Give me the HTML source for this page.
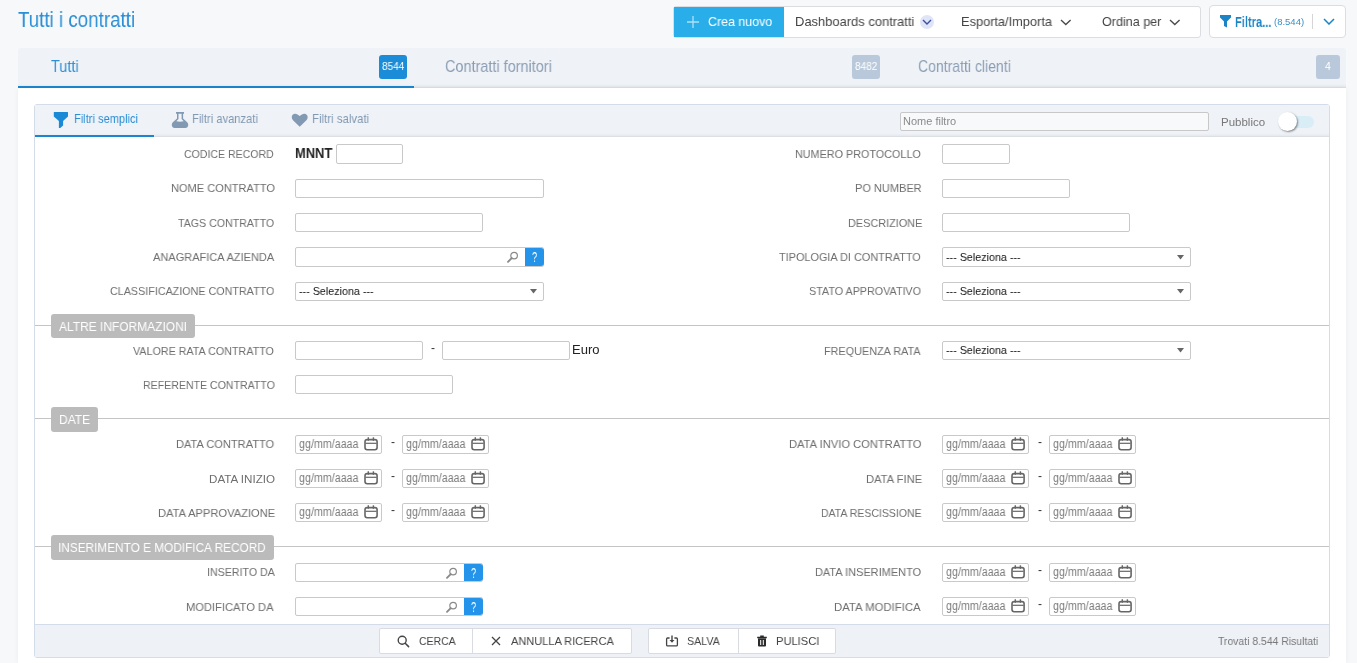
<!DOCTYPE html>
<html><head><meta charset="utf-8"><title>Tutti i contratti</title>
<style>
html,body{margin:0;padding:0}
body{width:1357px;height:663px;overflow:hidden;position:relative;background:#f7f8fa;font-family:"Liberation Sans",sans-serif}
.t{position:absolute;white-space:nowrap;transform-origin:0 0;will-change:transform}
</style></head><body>
<div style="position:absolute;left:673px;top:6px;width:528px;height:32px;box-sizing:border-box;border:1px solid #dcdde0;border-radius:3px;background:#fff"></div>
<div style="position:absolute;left:674px;top:7px;width:110px;height:30px;box-sizing:border-box;background:#2aaee9"></div>
<div style="position:absolute;left:1209px;top:5px;width:137px;height:33px;box-sizing:border-box;border:1px solid #dcdde0;border-radius:4px;background:#fff"></div>
<div style="position:absolute;left:1312px;top:14px;width:1px;height:15px;box-sizing:border-box;background:#d5d5d5"></div>
<div style="position:absolute;left:18px;top:48px;width:1328px;height:40px;box-sizing:border-box;background:#eff2f7;border-bottom:1px solid #dcdfe4;border-radius:3px 3px 0 0;box-shadow:inset 0 -3px 3px -2px rgba(0,0,0,0.05)"></div>
<div style="position:absolute;left:18px;top:86px;width:396px;height:2px;box-sizing:border-box;background:#1a86d0"></div>
<div style="position:absolute;left:379px;top:55px;width:28px;height:24px;box-sizing:border-box;background:#1b8cd8;border-radius:3px"></div>
<div style="position:absolute;left:852px;top:55px;width:28px;height:24px;box-sizing:border-box;background:#b9c9db;border-radius:3px"></div>
<div style="position:absolute;left:1316px;top:55px;width:24px;height:24px;box-sizing:border-box;background:#b9c9db;border-radius:3px"></div>
<div style="position:absolute;left:18px;top:88px;width:1328px;height:575px;box-sizing:border-box;background:#fff;box-shadow:0 0 6px rgba(0,0,0,0.05)"></div>
<div style="position:absolute;left:34px;top:104px;width:1296px;height:554px;box-sizing:border-box;border:1px solid #d3dce8;border-radius:3px;background:#fff"></div>
<div style="position:absolute;left:35px;top:105px;width:1294px;height:32px;box-sizing:border-box;background:#eff2f7;border-bottom:1px solid #dcdfe3;box-shadow:inset 0 -3px 3px -2px rgba(0,0,0,0.05)"></div>
<div style="position:absolute;left:35px;top:135px;width:119px;height:2px;box-sizing:border-box;background:#1a86d0"></div>
<div style="position:absolute;left:900px;top:112px;width:309px;height:19px;box-sizing:border-box;border:1px solid #c8c8c8;border-radius:2px;background:#f8f9fb"></div>
<div style="position:absolute;left:1286px;top:116px;width:28px;height:12px;box-sizing:border-box;background:#d9edf7;border-radius:6px"></div>
<div style="position:absolute;left:1278px;top:112px;width:19px;height:19px;box-sizing:border-box;background:#fff;border-radius:50%;box-shadow:1px 1px 2px rgba(0,0,0,0.45)"></div>
<div style="position:absolute;left:35px;top:624px;width:1294px;height:33px;box-sizing:border-box;background:#eef2f7;border-top:1px solid #d3dce8"></div>
<div style="position:absolute;left:35px;top:325px;width:1294px;height:1px;box-sizing:border-box;background:#c4c4c4"></div>
<div style="position:absolute;left:51px;top:314px;width:144px;height:24px;box-sizing:border-box;background:#bbbbbb;border-radius:3px"></div>
<div style="position:absolute;left:35px;top:418px;width:1294px;height:1px;box-sizing:border-box;background:#c4c4c4"></div>
<div style="position:absolute;left:51px;top:407px;width:47px;height:25px;box-sizing:border-box;background:#bbbbbb;border-radius:3px"></div>
<div style="position:absolute;left:35px;top:546px;width:1294px;height:1px;box-sizing:border-box;background:#c4c4c4"></div>
<div style="position:absolute;left:51px;top:535px;width:223px;height:25px;box-sizing:border-box;background:#bbbbbb;border-radius:3px"></div>
<div style="position:absolute;left:336px;top:144px;width:67px;height:20px;box-sizing:border-box;border:1px solid #c9c9c9;border-radius:2px;background:#fff"></div>
<div style="position:absolute;left:295px;top:179px;width:249px;height:19px;box-sizing:border-box;border:1px solid #c9c9c9;border-radius:2px;background:#fff"></div>
<div style="position:absolute;left:295px;top:213px;width:188px;height:19px;box-sizing:border-box;border:1px solid #c9c9c9;border-radius:2px;background:#fff"></div>
<div style="position:absolute;left:295px;top:247px;width:249px;height:20px;box-sizing:border-box;border:1px solid #c9c9c9;border-radius:2px;background:#fff"></div>
<div style="position:absolute;left:524.5px;top:248px;width:19.5px;height:18px;box-sizing:border-box;background:#2394ea;border-radius:0 3px 3px 0"></div>
<svg style="position:absolute;left:506px;top:250px" width="14" height="14" viewBox="0 0 14 14"><circle cx="8.1" cy="5.6" r="3.3" fill="none" stroke="#8a8a8a" stroke-width="1.2"/><line x1="5.7" y1="8.1" x2="2" y2="11.8" stroke="#8a8a8a" stroke-width="1.9" stroke-linecap="round"/></svg>
<div style="position:absolute;left:295px;top:282px;width:249px;height:19px;box-sizing:border-box;border:1px solid #c9c9c9;border-radius:2px;background:#fff"></div>
<svg style="position:absolute;left:530px;top:289px" width="7" height="5" viewBox="0 0 7 5"><path d="M0 0H7L3.5 4.4Z" fill="#666"/></svg>
<div style="position:absolute;left:942px;top:144px;width:68px;height:20px;box-sizing:border-box;border:1px solid #c9c9c9;border-radius:2px;background:#fff"></div>
<div style="position:absolute;left:942px;top:179px;width:128px;height:19px;box-sizing:border-box;border:1px solid #c9c9c9;border-radius:2px;background:#fff"></div>
<div style="position:absolute;left:942px;top:213px;width:188px;height:19px;box-sizing:border-box;border:1px solid #c9c9c9;border-radius:2px;background:#fff"></div>
<div style="position:absolute;left:942px;top:247px;width:249px;height:20px;box-sizing:border-box;border:1px solid #c9c9c9;border-radius:2px;background:#fff"></div>
<svg style="position:absolute;left:1177px;top:255px" width="7" height="5" viewBox="0 0 7 5"><path d="M0 0H7L3.5 4.4Z" fill="#666"/></svg>
<div style="position:absolute;left:942px;top:282px;width:249px;height:19px;box-sizing:border-box;border:1px solid #c9c9c9;border-radius:2px;background:#fff"></div>
<svg style="position:absolute;left:1177px;top:289px" width="7" height="5" viewBox="0 0 7 5"><path d="M0 0H7L3.5 4.4Z" fill="#666"/></svg>
<div style="position:absolute;left:295px;top:341px;width:128px;height:19px;box-sizing:border-box;border:1px solid #c9c9c9;border-radius:2px;background:#fff"></div>
<div style="position:absolute;left:442px;top:341px;width:128px;height:19px;box-sizing:border-box;border:1px solid #c9c9c9;border-radius:2px;background:#fff"></div>
<div style="position:absolute;left:295px;top:375px;width:158px;height:19px;box-sizing:border-box;border:1px solid #c9c9c9;border-radius:2px;background:#fff"></div>
<div style="position:absolute;left:942px;top:341px;width:249px;height:19px;box-sizing:border-box;border:1px solid #c9c9c9;border-radius:2px;background:#fff"></div>
<svg style="position:absolute;left:1177px;top:348px" width="7" height="5" viewBox="0 0 7 5"><path d="M0 0H7L3.5 4.4Z" fill="#666"/></svg>
<div style="position:absolute;left:295px;top:435px;width:87px;height:19px;box-sizing:border-box;border:1px solid #c9c9c9;border-radius:2px;background:#fff"></div>
<svg style="position:absolute;left:364px;top:437px" width="15" height="15" viewBox="0 0 15 15"><rect x="1" y="2.6" width="12.1" height="10.2" rx="2.2" fill="none" stroke="#666" stroke-width="1.6"/><line x1="1.5" y1="6.3" x2="12.6" y2="6.3" stroke="#666" stroke-width="1.2"/><line x1="4.3" y1="0.3" x2="4.3" y2="3.8" stroke="#666" stroke-width="1.4"/><line x1="9.4" y1="0.3" x2="9.4" y2="3.8" stroke="#666" stroke-width="1.4"/></svg>
<div style="position:absolute;left:402px;top:435px;width:87px;height:19px;box-sizing:border-box;border:1px solid #c9c9c9;border-radius:2px;background:#fff"></div>
<svg style="position:absolute;left:471px;top:437px" width="15" height="15" viewBox="0 0 15 15"><rect x="1" y="2.6" width="12.1" height="10.2" rx="2.2" fill="none" stroke="#666" stroke-width="1.6"/><line x1="1.5" y1="6.3" x2="12.6" y2="6.3" stroke="#666" stroke-width="1.2"/><line x1="4.3" y1="0.3" x2="4.3" y2="3.8" stroke="#666" stroke-width="1.4"/><line x1="9.4" y1="0.3" x2="9.4" y2="3.8" stroke="#666" stroke-width="1.4"/></svg>
<div style="position:absolute;left:942px;top:435px;width:87px;height:19px;box-sizing:border-box;border:1px solid #c9c9c9;border-radius:2px;background:#fff"></div>
<svg style="position:absolute;left:1011px;top:437px" width="15" height="15" viewBox="0 0 15 15"><rect x="1" y="2.6" width="12.1" height="10.2" rx="2.2" fill="none" stroke="#666" stroke-width="1.6"/><line x1="1.5" y1="6.3" x2="12.6" y2="6.3" stroke="#666" stroke-width="1.2"/><line x1="4.3" y1="0.3" x2="4.3" y2="3.8" stroke="#666" stroke-width="1.4"/><line x1="9.4" y1="0.3" x2="9.4" y2="3.8" stroke="#666" stroke-width="1.4"/></svg>
<div style="position:absolute;left:1049px;top:435px;width:87px;height:19px;box-sizing:border-box;border:1px solid #c9c9c9;border-radius:2px;background:#fff"></div>
<svg style="position:absolute;left:1118px;top:437px" width="15" height="15" viewBox="0 0 15 15"><rect x="1" y="2.6" width="12.1" height="10.2" rx="2.2" fill="none" stroke="#666" stroke-width="1.6"/><line x1="1.5" y1="6.3" x2="12.6" y2="6.3" stroke="#666" stroke-width="1.2"/><line x1="4.3" y1="0.3" x2="4.3" y2="3.8" stroke="#666" stroke-width="1.4"/><line x1="9.4" y1="0.3" x2="9.4" y2="3.8" stroke="#666" stroke-width="1.4"/></svg>
<div style="position:absolute;left:295px;top:469px;width:87px;height:19px;box-sizing:border-box;border:1px solid #c9c9c9;border-radius:2px;background:#fff"></div>
<svg style="position:absolute;left:364px;top:471px" width="15" height="15" viewBox="0 0 15 15"><rect x="1" y="2.6" width="12.1" height="10.2" rx="2.2" fill="none" stroke="#666" stroke-width="1.6"/><line x1="1.5" y1="6.3" x2="12.6" y2="6.3" stroke="#666" stroke-width="1.2"/><line x1="4.3" y1="0.3" x2="4.3" y2="3.8" stroke="#666" stroke-width="1.4"/><line x1="9.4" y1="0.3" x2="9.4" y2="3.8" stroke="#666" stroke-width="1.4"/></svg>
<div style="position:absolute;left:402px;top:469px;width:87px;height:19px;box-sizing:border-box;border:1px solid #c9c9c9;border-radius:2px;background:#fff"></div>
<svg style="position:absolute;left:471px;top:471px" width="15" height="15" viewBox="0 0 15 15"><rect x="1" y="2.6" width="12.1" height="10.2" rx="2.2" fill="none" stroke="#666" stroke-width="1.6"/><line x1="1.5" y1="6.3" x2="12.6" y2="6.3" stroke="#666" stroke-width="1.2"/><line x1="4.3" y1="0.3" x2="4.3" y2="3.8" stroke="#666" stroke-width="1.4"/><line x1="9.4" y1="0.3" x2="9.4" y2="3.8" stroke="#666" stroke-width="1.4"/></svg>
<div style="position:absolute;left:942px;top:469px;width:87px;height:19px;box-sizing:border-box;border:1px solid #c9c9c9;border-radius:2px;background:#fff"></div>
<svg style="position:absolute;left:1011px;top:471px" width="15" height="15" viewBox="0 0 15 15"><rect x="1" y="2.6" width="12.1" height="10.2" rx="2.2" fill="none" stroke="#666" stroke-width="1.6"/><line x1="1.5" y1="6.3" x2="12.6" y2="6.3" stroke="#666" stroke-width="1.2"/><line x1="4.3" y1="0.3" x2="4.3" y2="3.8" stroke="#666" stroke-width="1.4"/><line x1="9.4" y1="0.3" x2="9.4" y2="3.8" stroke="#666" stroke-width="1.4"/></svg>
<div style="position:absolute;left:1049px;top:469px;width:87px;height:19px;box-sizing:border-box;border:1px solid #c9c9c9;border-radius:2px;background:#fff"></div>
<svg style="position:absolute;left:1118px;top:471px" width="15" height="15" viewBox="0 0 15 15"><rect x="1" y="2.6" width="12.1" height="10.2" rx="2.2" fill="none" stroke="#666" stroke-width="1.6"/><line x1="1.5" y1="6.3" x2="12.6" y2="6.3" stroke="#666" stroke-width="1.2"/><line x1="4.3" y1="0.3" x2="4.3" y2="3.8" stroke="#666" stroke-width="1.4"/><line x1="9.4" y1="0.3" x2="9.4" y2="3.8" stroke="#666" stroke-width="1.4"/></svg>
<div style="position:absolute;left:295px;top:503px;width:87px;height:19px;box-sizing:border-box;border:1px solid #c9c9c9;border-radius:2px;background:#fff"></div>
<svg style="position:absolute;left:364px;top:505px" width="15" height="15" viewBox="0 0 15 15"><rect x="1" y="2.6" width="12.1" height="10.2" rx="2.2" fill="none" stroke="#666" stroke-width="1.6"/><line x1="1.5" y1="6.3" x2="12.6" y2="6.3" stroke="#666" stroke-width="1.2"/><line x1="4.3" y1="0.3" x2="4.3" y2="3.8" stroke="#666" stroke-width="1.4"/><line x1="9.4" y1="0.3" x2="9.4" y2="3.8" stroke="#666" stroke-width="1.4"/></svg>
<div style="position:absolute;left:402px;top:503px;width:87px;height:19px;box-sizing:border-box;border:1px solid #c9c9c9;border-radius:2px;background:#fff"></div>
<svg style="position:absolute;left:471px;top:505px" width="15" height="15" viewBox="0 0 15 15"><rect x="1" y="2.6" width="12.1" height="10.2" rx="2.2" fill="none" stroke="#666" stroke-width="1.6"/><line x1="1.5" y1="6.3" x2="12.6" y2="6.3" stroke="#666" stroke-width="1.2"/><line x1="4.3" y1="0.3" x2="4.3" y2="3.8" stroke="#666" stroke-width="1.4"/><line x1="9.4" y1="0.3" x2="9.4" y2="3.8" stroke="#666" stroke-width="1.4"/></svg>
<div style="position:absolute;left:942px;top:503px;width:87px;height:19px;box-sizing:border-box;border:1px solid #c9c9c9;border-radius:2px;background:#fff"></div>
<svg style="position:absolute;left:1011px;top:505px" width="15" height="15" viewBox="0 0 15 15"><rect x="1" y="2.6" width="12.1" height="10.2" rx="2.2" fill="none" stroke="#666" stroke-width="1.6"/><line x1="1.5" y1="6.3" x2="12.6" y2="6.3" stroke="#666" stroke-width="1.2"/><line x1="4.3" y1="0.3" x2="4.3" y2="3.8" stroke="#666" stroke-width="1.4"/><line x1="9.4" y1="0.3" x2="9.4" y2="3.8" stroke="#666" stroke-width="1.4"/></svg>
<div style="position:absolute;left:1049px;top:503px;width:87px;height:19px;box-sizing:border-box;border:1px solid #c9c9c9;border-radius:2px;background:#fff"></div>
<svg style="position:absolute;left:1118px;top:505px" width="15" height="15" viewBox="0 0 15 15"><rect x="1" y="2.6" width="12.1" height="10.2" rx="2.2" fill="none" stroke="#666" stroke-width="1.6"/><line x1="1.5" y1="6.3" x2="12.6" y2="6.3" stroke="#666" stroke-width="1.2"/><line x1="4.3" y1="0.3" x2="4.3" y2="3.8" stroke="#666" stroke-width="1.4"/><line x1="9.4" y1="0.3" x2="9.4" y2="3.8" stroke="#666" stroke-width="1.4"/></svg>
<div style="position:absolute;left:295px;top:563px;width:188px;height:19px;box-sizing:border-box;border:1px solid #c9c9c9;border-radius:2px;background:#fff"></div>
<div style="position:absolute;left:463.5px;top:564px;width:19.5px;height:17px;box-sizing:border-box;background:#2394ea;border-radius:0 3px 3px 0"></div>
<svg style="position:absolute;left:445px;top:566px" width="14" height="14" viewBox="0 0 14 14"><circle cx="8.1" cy="5.6" r="3.3" fill="none" stroke="#8a8a8a" stroke-width="1.2"/><line x1="5.7" y1="8.1" x2="2" y2="11.8" stroke="#8a8a8a" stroke-width="1.9" stroke-linecap="round"/></svg>
<div style="position:absolute;left:942px;top:563px;width:87px;height:19px;box-sizing:border-box;border:1px solid #c9c9c9;border-radius:2px;background:#fff"></div>
<svg style="position:absolute;left:1011px;top:565px" width="15" height="15" viewBox="0 0 15 15"><rect x="1" y="2.6" width="12.1" height="10.2" rx="2.2" fill="none" stroke="#666" stroke-width="1.6"/><line x1="1.5" y1="6.3" x2="12.6" y2="6.3" stroke="#666" stroke-width="1.2"/><line x1="4.3" y1="0.3" x2="4.3" y2="3.8" stroke="#666" stroke-width="1.4"/><line x1="9.4" y1="0.3" x2="9.4" y2="3.8" stroke="#666" stroke-width="1.4"/></svg>
<div style="position:absolute;left:1049px;top:563px;width:87px;height:19px;box-sizing:border-box;border:1px solid #c9c9c9;border-radius:2px;background:#fff"></div>
<svg style="position:absolute;left:1118px;top:565px" width="15" height="15" viewBox="0 0 15 15"><rect x="1" y="2.6" width="12.1" height="10.2" rx="2.2" fill="none" stroke="#666" stroke-width="1.6"/><line x1="1.5" y1="6.3" x2="12.6" y2="6.3" stroke="#666" stroke-width="1.2"/><line x1="4.3" y1="0.3" x2="4.3" y2="3.8" stroke="#666" stroke-width="1.4"/><line x1="9.4" y1="0.3" x2="9.4" y2="3.8" stroke="#666" stroke-width="1.4"/></svg>
<div style="position:absolute;left:295px;top:597px;width:188px;height:19px;box-sizing:border-box;border:1px solid #c9c9c9;border-radius:2px;background:#fff"></div>
<div style="position:absolute;left:463.5px;top:598px;width:19.5px;height:17px;box-sizing:border-box;background:#2394ea;border-radius:0 3px 3px 0"></div>
<svg style="position:absolute;left:445px;top:600px" width="14" height="14" viewBox="0 0 14 14"><circle cx="8.1" cy="5.6" r="3.3" fill="none" stroke="#8a8a8a" stroke-width="1.2"/><line x1="5.7" y1="8.1" x2="2" y2="11.8" stroke="#8a8a8a" stroke-width="1.9" stroke-linecap="round"/></svg>
<div style="position:absolute;left:942px;top:597px;width:87px;height:19px;box-sizing:border-box;border:1px solid #c9c9c9;border-radius:2px;background:#fff"></div>
<svg style="position:absolute;left:1011px;top:599px" width="15" height="15" viewBox="0 0 15 15"><rect x="1" y="2.6" width="12.1" height="10.2" rx="2.2" fill="none" stroke="#666" stroke-width="1.6"/><line x1="1.5" y1="6.3" x2="12.6" y2="6.3" stroke="#666" stroke-width="1.2"/><line x1="4.3" y1="0.3" x2="4.3" y2="3.8" stroke="#666" stroke-width="1.4"/><line x1="9.4" y1="0.3" x2="9.4" y2="3.8" stroke="#666" stroke-width="1.4"/></svg>
<div style="position:absolute;left:1049px;top:597px;width:87px;height:19px;box-sizing:border-box;border:1px solid #c9c9c9;border-radius:2px;background:#fff"></div>
<svg style="position:absolute;left:1118px;top:599px" width="15" height="15" viewBox="0 0 15 15"><rect x="1" y="2.6" width="12.1" height="10.2" rx="2.2" fill="none" stroke="#666" stroke-width="1.6"/><line x1="1.5" y1="6.3" x2="12.6" y2="6.3" stroke="#666" stroke-width="1.2"/><line x1="4.3" y1="0.3" x2="4.3" y2="3.8" stroke="#666" stroke-width="1.4"/><line x1="9.4" y1="0.3" x2="9.4" y2="3.8" stroke="#666" stroke-width="1.4"/></svg>
<div style="position:absolute;left:379px;top:628px;width:253px;height:26px;box-sizing:border-box;border:1px solid #d8dce2;border-radius:2px;background:#fff"></div>
<div style="position:absolute;left:472px;top:629px;width:1px;height:24px;box-sizing:border-box;background:#d8dce2"></div>
<div style="position:absolute;left:648px;top:628px;width:188px;height:26px;box-sizing:border-box;border:1px solid #d8dce2;border-radius:2px;background:#fff"></div>
<div style="position:absolute;left:738px;top:629px;width:1px;height:24px;box-sizing:border-box;background:#d8dce2"></div>
<svg style="position:absolute;left:397px;top:635px" width="13" height="13" viewBox="0 0 13 13"><circle cx="5.2" cy="5.2" r="4" fill="none" stroke="#444" stroke-width="1.4"/><line x1="8.2" y1="8.2" x2="11.6" y2="11.6" stroke="#444" stroke-width="1.5" stroke-linecap="round"/></svg>
<svg style="position:absolute;left:491px;top:636px" width="10" height="10" viewBox="0 0 10 10"><path d="M1 1L9 9M9 1L1 9" stroke="#444" stroke-width="1.3"/></svg>
<svg style="position:absolute;left:665px;top:635px" width="14" height="12" viewBox="0 0 14 12"><path d="M4.6 3H2.6Q1.6 3 1.6 4V9.9Q1.6 10.9 2.6 10.9H11.4Q12.4 10.9 12.4 9.9V4Q12.4 3 11.4 3H9.4" fill="none" stroke="#444" stroke-width="1.3"/><path d="M7 0.6V5.6" stroke="#444" stroke-width="1.4"/><path d="M4.5 5H9.5L7 7.8Z" fill="#444"/></svg>
<svg style="position:absolute;left:757px;top:635px" width="10" height="12" viewBox="0 0 10 12"><path d="M0.2 1.7H9.8V3.2H0.2Z M3.2 0.4H6.8V1.8H3.2Z M1 3.6H9V10.6Q9 11.5 8.1 11.5H1.9Q1 11.5 1 10.6Z" fill="#2a2a2a"/><path d="M3.7 5V10M6.3 5V10" stroke="#fff" stroke-width="1"/></svg>
<svg style="position:absolute;left:687px;top:16px" width="12" height="12" viewBox="0 0 12 12"><path d="M6 0V12M0 6H12" stroke="rgba(255,255,255,0.62)" stroke-width="1.3"/></svg>
<div style="position:absolute;left:920px;top:15px;width:14px;height:14px;border-radius:50%;background:#dfe5f6"></div>
<svg style="position:absolute;left:922px;top:19px" width="10" height="6" viewBox="0 0 10 6"><path d="M1 1L5 5L9 1" fill="none" stroke="#3b4fa3" stroke-width="1.4"/></svg>
<svg style="position:absolute;left:1060px;top:19px" width="12" height="7" viewBox="0 0 12 7"><path d="M1 1L5.8 5.6L10.6 1" fill="none" stroke="#4a4a4a" stroke-width="1.35"/></svg>
<svg style="position:absolute;left:1169px;top:19px" width="12" height="7" viewBox="0 0 12 7"><path d="M1 1L5.8 5.6L10.6 1" fill="none" stroke="#4a4a4a" stroke-width="1.35"/></svg>
<svg style="position:absolute;left:1323px;top:18px" width="12" height="7" viewBox="0 0 12 7"><path d="M1 1L6 6L11 1" fill="none" stroke="#1a84c6" stroke-width="1.5"/></svg>
<svg style="position:absolute;left:1220px;top:15px" width="11" height="13" viewBox="0 0 11 13"><path d="M0 0H11V2.5L7 6.5V12.5L4 11V6.5L0 2.5Z" fill="#1a84c6"/></svg>
<svg style="position:absolute;left:53px;top:111px" width="16" height="18" viewBox="0 0 16 18"><path d="M1.3 1H14.5Q15 1 15 1.5V5.6L10.1 10.1V14.4L7.2 16.9H5.9V10.1L0.8 5.6V1.5Q0.8 1 1.3 1Z" fill="#1a8ad6"/></svg>
<svg style="position:absolute;left:171px;top:111px" width="18" height="18" viewBox="0 0 18 18"><path fill-rule="evenodd" d="M5 1H13V2.8H12.1V7.4L16.4 11.6Q17.6 13 17.1 15Q16.4 16.9 14.5 16.9H3.5Q1.6 16.9 0.9 15Q0.4 13 1.6 11.6L6 7.4V2.8H5Z M7.5 2.8V8L5.3 10.3Q9 11 12.7 10.3L10.6 8V2.8Z" fill="#8199b3"/></svg>
<svg style="position:absolute;left:291px;top:113px" width="18" height="15" viewBox="0 0 18 15"><path d="M8.7 13.8L2 7.3C-0.2 5.1 0.6 1.1 3.6 0.8C5.5 0.6 7.2 1.6 8.7 3.1C10.2 1.6 11.9 0.6 13.8 0.8C16.8 1.1 17.6 5.1 15.4 7.3Z" fill="#8199b3"/></svg>
<div class="t" style="left:18.10px;top:9.00px;font-size:22px;line-height:22px;transform:scaleX(0.8529);color:#2b8fd5;">Tutti i contratti</div>
<div class="t" style="left:708.00px;top:15.00px;font-size:13px;line-height:13px;transform:scaleX(0.9552);color:#fff;">Crea nuovo</div>
<div class="t" style="left:794.61px;top:15.00px;font-size:13px;line-height:13px;transform:scaleX(0.9949);color:#444;">Dashboards contratti</div>
<div class="t" style="left:961.02px;top:15.00px;font-size:13px;line-height:13px;transform:scaleX(0.9837);color:#444;">Esporta/Importa</div>
<div class="t" style="left:1102.00px;top:15.00px;font-size:13px;line-height:13px;transform:scaleX(0.9677);color:#444;">Ordina per</div>
<div class="t" style="left:1235.43px;top:15.00px;font-size:14.5px;line-height:14.5px;transform:scaleX(0.7652);color:#1a84c6;font-weight:bold;">Filtra...</div>
<div class="t" style="left:1274.00px;top:17.00px;font-size:9.5px;line-height:9.5px;transform:scaleX(0.9933);color:#3a90c8;">(8.544)</div>
<div class="t" style="left:50.50px;top:58.00px;font-size:17px;line-height:17px;transform:scaleX(0.8500);color:#2b8fd5;">Tutti</div>
<div class="t" style="left:445.15px;top:58.00px;font-size:17px;line-height:17px;transform:scaleX(0.8500);color:#8a9db3;">Contratti fornitori</div>
<div class="t" style="left:917.97px;top:58.00px;font-size:17px;line-height:17px;transform:scaleX(0.8252);color:#8a9db3;">Contratti clienti</div>
<div class="t" style="left:381.80px;top:61.00px;font-size:10.5px;line-height:10.5px;transform:scaleX(0.9565);color:#fff;">8544</div>
<div class="t" style="left:854.80px;top:61.00px;font-size:10.5px;line-height:10.5px;transform:scaleX(0.9565);color:#fff;">8482</div>
<div class="t" style="left:1325.00px;top:61.00px;font-size:10.5px;line-height:10.5px;transform:scaleX(1.0000);color:#fff;">4</div>
<div class="t" style="left:73.55px;top:112.00px;font-size:13px;line-height:13px;transform:scaleX(0.8514);color:#2b8fd5;">Filtri semplici</div>
<div class="t" style="left:192.14px;top:112.00px;font-size:13px;line-height:13px;transform:scaleX(0.8613);color:#8199b3;">Filtri avanzati</div>
<div class="t" style="left:312.42px;top:112.00px;font-size:13px;line-height:13px;transform:scaleX(0.8794);color:#8199b3;">Filtri salvati</div>
<div class="t" style="left:902.60px;top:116.00px;font-size:11px;line-height:11px;transform:scaleX(1.0000);color:#8a8a8a;">Nome filtro</div>
<div class="t" style="left:1220.90px;top:117.00px;font-size:11.5px;line-height:11.5px;transform:scaleX(1.0000);color:#777;">Pubblico</div>
<div class="t" style="left:1217.90px;top:636.00px;font-size:11.5px;line-height:11.5px;transform:scaleX(0.9045);color:#777;">Trovati 8.544 Risultati</div>
<div class="t" style="left:59.20px;top:320.00px;font-size:13px;line-height:13px;transform:scaleX(0.9203);color:#fff;">ALTRE INFORMAZIONI</div>
<div class="t" style="left:58.88px;top:413.00px;font-size:13px;line-height:13px;transform:scaleX(0.9242);color:#fff;">DATE</div>
<div class="t" style="left:58.09px;top:541.00px;font-size:13px;line-height:13px;transform:scaleX(0.9084);color:#fff;">INSERIMENTO E MODIFICA RECORD</div>
<div class="t" style="left:184.40px;top:149.00px;font-size:11.5px;line-height:11.5px;transform:scaleX(0.9173);color:#6e6e6e;">CODICE RECORD</div>
<div class="t" style="left:170.54px;top:183.00px;font-size:11.5px;line-height:11.5px;transform:scaleX(0.9607);color:#6e6e6e;">NOME CONTRATTO</div>
<div class="t" style="left:178.30px;top:218.00px;font-size:11.5px;line-height:11.5px;transform:scaleX(0.9231);color:#6e6e6e;">TAGS CONTRATTO</div>
<div class="t" style="left:152.60px;top:252.00px;font-size:11.5px;line-height:11.5px;transform:scaleX(0.9583);color:#6e6e6e;">ANAGRAFICA AZIENDA</div>
<div class="t" style="left:109.90px;top:286.00px;font-size:11.5px;line-height:11.5px;transform:scaleX(0.9341);color:#6e6e6e;">CLASSIFICAZIONE CONTRATTO</div>
<div class="t" style="left:795.46px;top:149.00px;font-size:11.5px;line-height:11.5px;transform:scaleX(0.9391);color:#6e6e6e;">NUMERO PROTOCOLLO</div>
<div class="t" style="left:855.24px;top:183.00px;font-size:11.5px;line-height:11.5px;transform:scaleX(0.9574);color:#6e6e6e;">PO NUMBER</div>
<div class="t" style="left:847.55px;top:218.00px;font-size:11.5px;line-height:11.5px;transform:scaleX(0.9455);color:#6e6e6e;">DESCRIZIONE</div>
<div class="t" style="left:779.30px;top:252.00px;font-size:11.5px;line-height:11.5px;transform:scaleX(0.9467);color:#6e6e6e;">TIPOLOGIA DI CONTRATTO</div>
<div class="t" style="left:809.00px;top:286.00px;font-size:11.5px;line-height:11.5px;transform:scaleX(0.9358);color:#6e6e6e;">STATO APPROVATIVO</div>
<div class="t" style="left:133.40px;top:346.00px;font-size:11.5px;line-height:11.5px;transform:scaleX(0.9331);color:#6e6e6e;">VALORE RATA CONTRATTO</div>
<div class="t" style="left:142.78px;top:380.00px;font-size:11.5px;line-height:11.5px;transform:scaleX(0.9197);color:#6e6e6e;">REFERENTE CONTRATTO</div>
<div class="t" style="left:824.16px;top:346.00px;font-size:11.5px;line-height:11.5px;transform:scaleX(0.9431);color:#6e6e6e;">FREQUENZA RATA</div>
<div class="t" style="left:176.14px;top:439.00px;font-size:11.5px;line-height:11.5px;transform:scaleX(0.9624);color:#6e6e6e;">DATA CONTRATTO</div>
<div class="t" style="left:208.69px;top:474.00px;font-size:11.5px;line-height:11.5px;transform:scaleX(1.0094);color:#6e6e6e;">DATA INIZIO</div>
<div class="t" style="left:157.83px;top:508.00px;font-size:11.5px;line-height:11.5px;transform:scaleX(0.9706);color:#6e6e6e;">DATA APPROVAZIONE</div>
<div class="t" style="left:789.23px;top:439.00px;font-size:11.5px;line-height:11.5px;transform:scaleX(0.9711);color:#6e6e6e;">DATA INVIO CONTRATTO</div>
<div class="t" style="left:865.83px;top:474.00px;font-size:11.5px;line-height:11.5px;transform:scaleX(0.9732);color:#6e6e6e;">DATA FINE</div>
<div class="t" style="left:820.89px;top:508.00px;font-size:11.5px;line-height:11.5px;transform:scaleX(0.9128);color:#6e6e6e;">DATA RESCISSIONE</div>
<div class="t" style="left:206.67px;top:567.00px;font-size:11.5px;line-height:11.5px;transform:scaleX(0.9264);color:#6e6e6e;">INSERITO DA</div>
<div class="t" style="left:186.13px;top:602.00px;font-size:11.5px;line-height:11.5px;transform:scaleX(0.9689);color:#6e6e6e;">MODIFICATO DA</div>
<div class="t" style="left:815.35px;top:567.00px;font-size:11.5px;line-height:11.5px;transform:scaleX(0.9545);color:#6e6e6e;">DATA INSERIMENTO</div>
<div class="t" style="left:834.31px;top:602.00px;font-size:11.5px;line-height:11.5px;transform:scaleX(0.9885);color:#6e6e6e;">DATA MODIFICA</div>
<div class="t" style="left:295.08px;top:146.00px;font-size:14px;line-height:14px;transform:scaleX(0.9200);color:#222;font-weight:bold;">MNNT</div>
<div class="t" style="left:531.80px;top:250.00px;font-size:14px;line-height:14px;transform:scaleX(0.6500);color:#fff;">?</div>
<div class="t" style="left:299.00px;top:286.00px;font-size:11.5px;line-height:11.5px;transform:scaleX(0.9338);color:#111;">--- Seleziona ---</div>
<div class="t" style="left:946.00px;top:252.00px;font-size:11.5px;line-height:11.5px;transform:scaleX(0.9338);color:#111;">--- Seleziona ---</div>
<div class="t" style="left:946.00px;top:286.00px;font-size:11.5px;line-height:11.5px;transform:scaleX(0.9338);color:#111;">--- Seleziona ---</div>
<div class="t" style="left:431.00px;top:342.00px;font-size:12px;line-height:12px;transform:scaleX(0.8750);color:#333;">-</div>
<div class="t" style="left:572.01px;top:343.00px;font-size:13px;line-height:13px;transform:scaleX(0.9885);color:#222;">Euro</div>
<div class="t" style="left:946.00px;top:345.00px;font-size:11.5px;line-height:11.5px;transform:scaleX(0.9338);color:#111;">--- Seleziona ---</div>
<div class="t" style="left:298.50px;top:438.00px;font-size:12.5px;line-height:12.5px;transform:scaleX(0.8571);color:#7c7c7c;">gg/mm/aaaa</div>
<div class="t" style="left:405.50px;top:438.00px;font-size:12.5px;line-height:12.5px;transform:scaleX(0.8571);color:#7c7c7c;">gg/mm/aaaa</div>
<div class="t" style="left:391.00px;top:436.00px;font-size:12px;line-height:12px;transform:scaleX(0.8750);color:#333;">-</div>
<div class="t" style="left:945.50px;top:438.00px;font-size:12.5px;line-height:12.5px;transform:scaleX(0.8571);color:#7c7c7c;">gg/mm/aaaa</div>
<div class="t" style="left:1052.50px;top:438.00px;font-size:12.5px;line-height:12.5px;transform:scaleX(0.8571);color:#7c7c7c;">gg/mm/aaaa</div>
<div class="t" style="left:1038.00px;top:436.00px;font-size:12px;line-height:12px;transform:scaleX(0.8750);color:#333;">-</div>
<div class="t" style="left:298.50px;top:472.00px;font-size:12.5px;line-height:12.5px;transform:scaleX(0.8571);color:#7c7c7c;">gg/mm/aaaa</div>
<div class="t" style="left:405.50px;top:472.00px;font-size:12.5px;line-height:12.5px;transform:scaleX(0.8571);color:#7c7c7c;">gg/mm/aaaa</div>
<div class="t" style="left:391.00px;top:470.00px;font-size:12px;line-height:12px;transform:scaleX(0.8750);color:#333;">-</div>
<div class="t" style="left:945.50px;top:472.00px;font-size:12.5px;line-height:12.5px;transform:scaleX(0.8571);color:#7c7c7c;">gg/mm/aaaa</div>
<div class="t" style="left:1052.50px;top:472.00px;font-size:12.5px;line-height:12.5px;transform:scaleX(0.8571);color:#7c7c7c;">gg/mm/aaaa</div>
<div class="t" style="left:1038.00px;top:470.00px;font-size:12px;line-height:12px;transform:scaleX(0.8750);color:#333;">-</div>
<div class="t" style="left:298.50px;top:506.00px;font-size:12.5px;line-height:12.5px;transform:scaleX(0.8571);color:#7c7c7c;">gg/mm/aaaa</div>
<div class="t" style="left:405.50px;top:506.00px;font-size:12.5px;line-height:12.5px;transform:scaleX(0.8571);color:#7c7c7c;">gg/mm/aaaa</div>
<div class="t" style="left:391.00px;top:504.00px;font-size:12px;line-height:12px;transform:scaleX(0.8750);color:#333;">-</div>
<div class="t" style="left:945.50px;top:506.00px;font-size:12.5px;line-height:12.5px;transform:scaleX(0.8571);color:#7c7c7c;">gg/mm/aaaa</div>
<div class="t" style="left:1052.50px;top:506.00px;font-size:12.5px;line-height:12.5px;transform:scaleX(0.8571);color:#7c7c7c;">gg/mm/aaaa</div>
<div class="t" style="left:1038.00px;top:504.00px;font-size:12px;line-height:12px;transform:scaleX(0.8750);color:#333;">-</div>
<div class="t" style="left:470.80px;top:566.00px;font-size:14px;line-height:14px;transform:scaleX(0.6500);color:#fff;">?</div>
<div class="t" style="left:945.50px;top:566.00px;font-size:12.5px;line-height:12.5px;transform:scaleX(0.8571);color:#7c7c7c;">gg/mm/aaaa</div>
<div class="t" style="left:1052.50px;top:566.00px;font-size:12.5px;line-height:12.5px;transform:scaleX(0.8571);color:#7c7c7c;">gg/mm/aaaa</div>
<div class="t" style="left:1038.00px;top:564.00px;font-size:12px;line-height:12px;transform:scaleX(0.8750);color:#333;">-</div>
<div class="t" style="left:470.80px;top:600.00px;font-size:14px;line-height:14px;transform:scaleX(0.6500);color:#fff;">?</div>
<div class="t" style="left:945.50px;top:600.00px;font-size:12.5px;line-height:12.5px;transform:scaleX(0.8571);color:#7c7c7c;">gg/mm/aaaa</div>
<div class="t" style="left:1052.50px;top:600.00px;font-size:12.5px;line-height:12.5px;transform:scaleX(0.8571);color:#7c7c7c;">gg/mm/aaaa</div>
<div class="t" style="left:1038.00px;top:598.00px;font-size:12px;line-height:12px;transform:scaleX(0.8750);color:#333;">-</div>
<div class="t" style="left:418.70px;top:636.00px;font-size:11.5px;line-height:11.5px;transform:scaleX(0.9125);color:#444;">CERCA</div>
<div class="t" style="left:510.90px;top:636.00px;font-size:11.5px;line-height:11.5px;transform:scaleX(0.9574);color:#444;">ANNULLA RICERCA</div>
<div class="t" style="left:686.90px;top:636.00px;font-size:11.5px;line-height:11.5px;transform:scaleX(0.9250);color:#444;">SALVA</div>
<div class="t" style="left:776.03px;top:636.00px;font-size:11.5px;line-height:11.5px;transform:scaleX(0.9698);color:#444;">PULISCI</div>
</body></html>
